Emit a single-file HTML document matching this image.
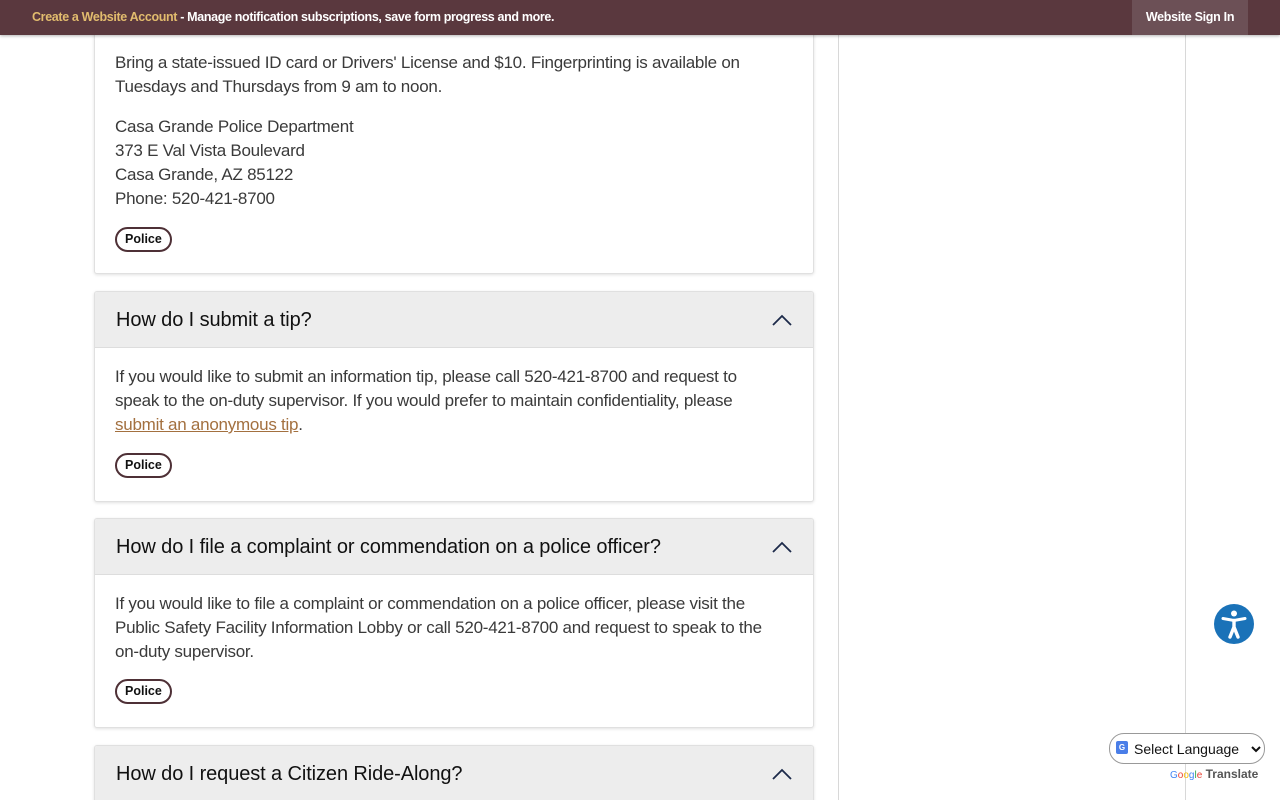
<!DOCTYPE html>
<html><head><meta charset="utf-8"><style>
*{margin:0;padding:0;box-sizing:border-box}
html,body{width:1280px;height:800px;overflow:hidden}
body{background:#fff;font-family:"Liberation Sans",sans-serif;position:relative}
.top{position:absolute;left:0;top:0;width:1280px;height:35px;background:#5a383e;z-index:5;box-shadow:0 1px 3px rgba(0,0,0,.3)}
.top .msg{position:absolute;left:32px;top:10px;font-size:12.5px;font-weight:bold;color:#fff;letter-spacing:-0.35px;white-space:nowrap}
.top .msg b{color:#e2bc6e}
.top .sign{position:absolute;left:1132px;top:0;width:116px;height:35px;background:#6c5056;color:#fff;font-size:12.5px;font-weight:bold;text-align:center;line-height:35px;letter-spacing:-0.3px}
.vl{position:absolute;top:35px;bottom:0;width:1px;background:#d8d8d8}
.card{position:absolute;left:94px;width:720px;border:1px solid #e0e0e0;border-radius:3px;background:#fff;box-shadow:0 1px 3px rgba(0,0,0,.12);overflow:hidden}
.hd{height:56px;background:#ededed;border-bottom:1px solid #ddd;position:relative}
.hd span{position:absolute;left:21px;top:17px;font-size:20px;color:#111;white-space:nowrap;letter-spacing:-0.1px}
.hd svg{position:absolute;left:677px;top:22px}
.bd{padding:0 20px;font-size:17px;line-height:24px;color:#3a3a3a;white-space:nowrap;letter-spacing:-0.25px}
.tag{display:inline-block;border:2px solid #4e3036;border-radius:14px;padding:0 8px;height:25px;line-height:21px;font-size:12.5px;font-weight:bold;color:#111}
a{color:#a3703f;text-decoration:underline}
</style></head><body>
<div class="top"><div class="msg"><b>Create a Website Account</b> - Manage notification subscriptions, save form progress and more.</div><div class="sign">Website Sign In</div></div>
<div class="vl" style="left:838px"></div>
<div class="vl" style="left:1185px"></div>

<div class="card" style="top:20px;height:254px">
<div class="bd" style="position:absolute;left:0;top:30px">Bring a state-issued ID card or Drivers' License and $10. Fingerprinting is available on<br>Tuesdays and Thursdays from 9 am to noon.</div>
<div class="bd" style="position:absolute;left:0;top:94px">Casa Grande Police Department<br>373 E Val Vista Boulevard<br>Casa Grande, AZ 85122<br>Phone: 520-421-8700</div>
<div style="position:absolute;left:20px;top:206px"><span class="tag">Police</span></div>
</div>

<div class="card" style="top:291px;height:211px">
<div class="hd"><span>How do I submit a tip?</span><svg width="20" height="12"><path d="M1 11L10 2L19 11" fill="none" stroke="#1d2a4a" stroke-width="1.8"/></svg></div>
<div class="bd" style="padding-top:17px">If you would like to submit an information tip, please call 520-421-8700 and request to<br>speak to the on-duty supervisor. If you would prefer to maintain confidentiality, please<br><a>submit an anonymous tip</a>.</div>
<div style="position:absolute;left:20px;top:161px"><span class="tag">Police</span></div>
</div>

<div class="card" style="top:518px;height:210px">
<div class="hd"><span>How do I file a complaint or commendation on a police officer?</span><svg width="20" height="12"><path d="M1 11L10 2L19 11" fill="none" stroke="#1d2a4a" stroke-width="1.8"/></svg></div>
<div class="bd" style="padding-top:17px">If you would like to file a complaint or commendation on a police officer, please visit the<br>Public Safety Facility Information Lobby or call 520-421-8700 and request to speak to the<br>on-duty supervisor.</div>
<div style="position:absolute;left:20px;top:160px"><span class="tag">Police</span></div>
</div>

<div class="card" style="top:745px;height:80px">
<div class="hd"><span>How do I request a Citizen Ride-Along?</span><svg width="20" height="12"><path d="M1 11L10 2L19 11" fill="none" stroke="#1d2a4a" stroke-width="1.8"/></svg></div>
</div>

<svg style="position:absolute;left:1214px;top:604px" width="40" height="40" viewBox="0 0 40 40">
<circle cx="20" cy="20" r="20" fill="#1a72b8"/>
<circle cx="20" cy="9.5" r="3" fill="#fff"/>
<path d="M9 14.5L20 16.5L31 14.5" stroke="#fff" stroke-width="3" stroke-linecap="round" fill="none"/>
<path d="M20 16.5V23M20 23L16 33M20 23L24 33" stroke="#fff" stroke-width="3.4" stroke-linecap="round" fill="none"/>
</svg>

<div style="position:absolute;left:1109px;top:733px;width:156px;height:31px;border:1px solid #999;border-radius:15px;background:#fff;font-size:14px;color:#111">
<div style="position:absolute;left:6px;top:7px;width:12px;height:13px;background:#4a7ee8;border-radius:2px;color:#fff;font-size:8px;font-weight:bold;text-align:center;line-height:13px">G</div>
<div style="position:absolute;left:24px;top:7px">Select Language</div>
<svg style="position:absolute;left:141px;top:12px" width="10" height="7"><path d="M1 1L5 5L9 1" stroke="#111" stroke-width="2" fill="none"/></svg>
</div>
<div style="position:absolute;left:1170px;top:767px;font-size:12px;white-space:nowrap"><span style="font-size:10px;color:#4285f4">G<span style="color:#ea4335">o</span><span style="color:#fbbc05">o</span>g<span style="color:#34a853">l</span><span style="color:#ea4335">e</span></span> <span style="color:#555;font-weight:bold">Translate</span></div>
</body></html>
